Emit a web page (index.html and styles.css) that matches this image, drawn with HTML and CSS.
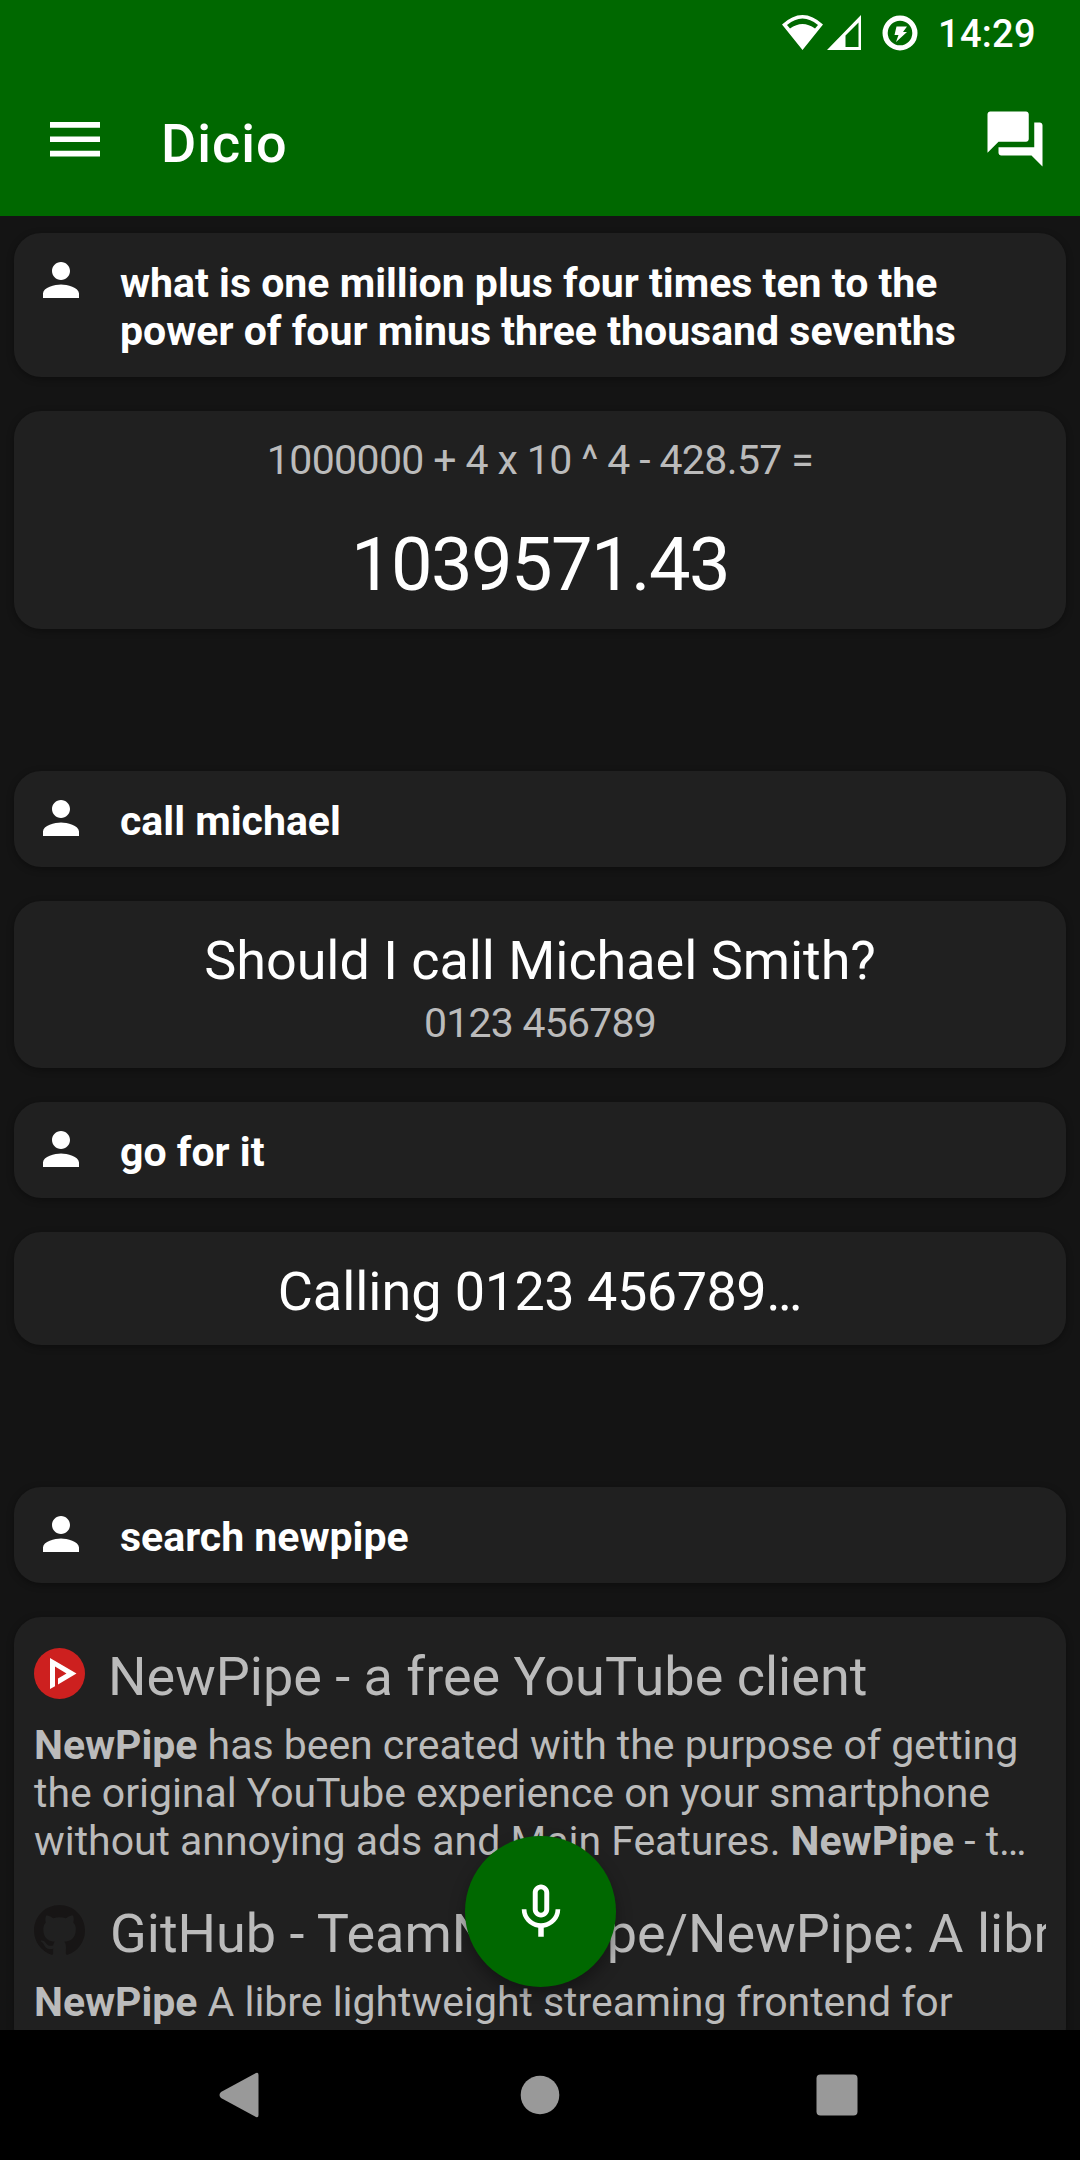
FILE: index.html
```html
<!DOCTYPE html>
<html lang="en">
<head>
<meta charset="utf-8">
<title>Dicio</title>
<link rel="stylesheet" href="styles.css">
</head>
<body>
<svg class="defs" aria-hidden="true">
  <symbol id="person" viewBox="0 0 24 24"><path d="M12 12c2.210 0 4-1.790 4-4s-1.790-4-4-4-4 1.790-4 4 1.790 4 4 4zm0 2c-2.670 0-8 1.340-8 4v2h16v-2c0-2.660-5.330-4-8-4z"/></symbol>
</svg>
<div class="screen">
  <header class="header">
    <div class="status">
      <svg class="wifi" viewBox="0 0 41 35"><path fill-rule="evenodd" d="M0 9.500Q20.500-9.500 41 9.500L20.500 35ZM5 10L8 13.500Q20.500 4.500 33 13.500L36 10Q20.500-3 5 10Z"/></svg>
      <svg class="signal" viewBox="0 0 34 35"><path fill-rule="evenodd" d="M0 35L34 0V35ZM18.500 20.500V32H31.500V7.500Z"/></svg>
      <svg class="saver" viewBox="0 0 36 36"><circle cx="18" cy="18" r="14.900"/><path d="M14.500 11.500H25L21 17H25L14 27L16.500 20H12.500Z"/></svg>
      <span class="clock">14:29</span>
    </div>
    <div class="toolbar">
      <svg class="menu" viewBox="0 0 50 35"><path d="M0 0H50V5.700H0ZM0 14.400H50V20H0ZM0 28.700H50V34.500H0Z"/></svg>
      <h1 class="title">Dicio</h1>
      <svg class="forum" viewBox="0 0 24 24"><path d="M21 6h-2v9H6v2c0 .55.45 1 1 1h11l4 4V7c0-.55-.45-1-1-1zm-4 6V3c0-.55-.45-1-1-1H3c-.55 0-1 .45-1 1v14l4-4h10c.55 0 1-.45 1-1z"/></svg>
    </div>
  </header>
  <main class="conversation">
    <section class="exchange">
      <div class="card query"><svg class="person"><use href="#person"/></svg><p>what is one million plus four times ten to the power of four minus three thousand sevenths</p></div>
      <div class="card answer">
        <p class="sub">1000000 + 4 x 10 ^ 4 - 428.57 =</p>
        <p class="result">1039571.43</p>
      </div>
    </section>
    <section class="exchange">
      <div class="card query"><svg class="person"><use href="#person"/></svg><p>call michael</p></div>
      <div class="card answer">
        <p class="headline">Should I call Michael Smith?</p>
        <p class="sub phone">0123 456789</p>
      </div>
      <div class="card query"><svg class="person"><use href="#person"/></svg><p>go for it</p></div>
      <div class="card answer"><p class="headline">Calling <span class="digits">0123 456789</span>…</p></div>
    </section>
    <section class="exchange">
      <div class="card query"><svg class="person"><use href="#person"/></svg><p>search newpipe</p></div>
      <div class="card results">
        <article class="hit">
          <div class="hit-head">
            <svg class="favicon" viewBox="0 0 51 51"><circle cx="25.500" cy="25.500" r="25.500" fill="#cd201f"/><path fill="#fff" fill-rule="evenodd" d="M16 10L42.500 25.500L24 36.500V30.500L32.500 25.500L21 18.500V38.200L16 41Z"/></svg>
            <h2>NewPipe - a free YouTube client</h2>
          </div>
          <p class="snippet"><b>NewPipe</b> has been created with the purpose of getting<br>the original YouTube experience on your smartphone<br>without annoying ads and Main Features. <b>NewPipe</b> - t…</p>
        </article>
        <article class="hit">
          <div class="hit-head">
            <svg class="favicon" viewBox="0 0 16 16"><path fill="#171515" d="M8 0C3.580 0 0 3.580 0 8c0 3.540 2.290 6.530 5.470 7.590.4.070.55-.17.55-.38 0-.19-.01-.82-.01-1.490-2.010.37-2.530-.49-2.690-.94-.09-.23-.48-.94-.82-1.130-.28-.15-.68-.52-.01-.53.63-.01 1.080.58 1.230.82.72 1.210 1.870.87 2.330.66.07-.52.28-.87.51-1.070-1.780-.2-3.640-.89-3.640-3.950 0-.87.31-1.590.82-2.150-.08-.2-.36-1.020.08-2.120 0 0 .67-.21 2.200.82.64-.18 1.320-.27 2-.27s1.360.09 2 .27c1.530-1.040 2.200-.82 2.200-.82.44 1.100.16 1.920.08 2.120.51.56.82 1.270.82 2.150 0 3.070-1.870 3.750-3.650 3.950.29.25.54.73.54 1.480 0 1.070-.01 1.930-.01 2.200 0 .21.15.46.55.38A8.010 8.010 0 0 0 16 8c0-4.420-3.580-8-8-8z"/></svg>
            <h2 class="indented">GitHub - TeamNewPipe/NewPipe: A libre</h2>
          </div>
          <p class="snippet"><b>NewPipe</b> A libre lightweight streaming frontend for</p>
        </article>
      </div>
    </section>
    <button class="fab" aria-label="Speak"><svg viewBox="0 0 24 24"><path d="M12 14c1.660 0 2.990-1.340 2.990-3L15 5c0-1.660-1.340-3-3-3S9 3.340 9 5v6c0 1.660 1.340 3 3 3zm-1.200-9.100c0-.66.54-1.200 1.200-1.200.66 0 1.200.54 1.200 1.200l-.01 6.200c0 .66-.53 1.200-1.190 1.200-.66 0-1.200-.54-1.200-1.200V4.900zm6.500 6.100c0 3-2.540 5.100-5.300 5.100S6.700 14 6.700 11H5c0 3.410 2.720 6.230 6 6.720V21h2v-3.280c3.280-.48 6-3.300 6-6.720h-1.700z"/></svg></button>
  </main>
  <nav class="navbar">
    <svg viewBox="0 0 44 44"><path d="M39 0Q41.500-1 41.500 2V42Q41.500 45 39 44L4 25Q1 22 4 19Z"/></svg>
    <svg viewBox="0 0 44 44"><circle cx="24" cy="22" r="19.300"/></svg>
    <svg viewBox="0 0 44 44"><rect x="1.500" y="1.500" width="41" height="41" rx="4"/></svg>
  </nav>
</div>
</body>
</html>
```
FILE: styles.css
```css
* { box-sizing: border-box; margin: 0; padding: 0; }
body { background: #141414; color: #fff; font-family: Roboto, sans-serif; }
svg { display: block; flex: none; fill: currentColor; }
.defs { position: absolute; width: 0; height: 0; }
.screen { display: flex; flex-direction: column; width: 1080px; height: 2160px; overflow: hidden; }

.header { height: 216px; flex: none; background: #006800; }
.status { display: flex; justify-content: flex-end; align-items: center; height: 65px; padding-right: 45px; }
.wifi { width: 41px; height: 35px; }
.signal { width: 34px; height: 35px; margin-left: 4px; }
.saver { width: 36px; height: 36px; margin-left: 21px; }
.saver circle { fill: none; stroke: #fff; stroke-width: 5.2; }
.clock { width: 97px; margin: 2px 0 0 20px; font-size: 38px; font-weight: 500; line-height: 46px; letter-spacing: .3px; white-space: nowrap; }
.toolbar { display: flex; align-items: center; height: 148px; padding: 0 32px 0 50px; }
.menu { width: 50px; height: 35px; }
.title { flex: 1; margin: 9px 0 0 61px; font-size: 54px; font-weight: 500; line-height: 64px; letter-spacing: 1px; }
.forum { width: 66px; height: 66px; }

.conversation { position: relative; flex: 1; min-height: 0; overflow: hidden; padding: 17px 14px 0; display: flex; flex-direction: column; gap: 142px; }
.exchange { display: flex; flex-direction: column; gap: 34px; }
.card { border-radius: 27px; background: #202020; box-shadow: 0 2px 7px rgba(0, 0, 0, .35); }
.query { display: flex; gap: 32px; padding: 26px 20px 22px; font-size: 41px; font-weight: 700; line-height: 48px; }
.person { width: 54px; height: 54px; margin: -6px 0; }
.answer { padding: 25px 20px 21px; text-align: center; }
.sub { color: #bbb; font-size: 41px; line-height: 48px; letter-spacing: -.62px; }
.result { margin-top: 37px; font-size: 74px; line-height: 87px; letter-spacing: -1.6px; }
.headline { padding-top: 3px; font-size: 54px; line-height: 64px; letter-spacing: -.05px; }
.digits { letter-spacing: -.5px; }
.phone { margin-top: 6px; letter-spacing: -.8px; }

.results { display: flex; flex-direction: column; gap: 37px; padding: 28px 20px; color: #bbb; }
.hit-head { display: flex; align-items: center; gap: 23px; overflow: hidden; }
.favicon { width: 51px; height: 51px; margin-top: -7px; }
.hit-head h2 { font-size: 54px; font-weight: 400; line-height: 64px; white-space: nowrap; }
.hit-head .indented { padding-left: 2px; }
.snippet { margin-top: 12px; font-size: 41px; line-height: 48px; letter-spacing: -.03px; white-space: nowrap; }

.fab { position: absolute; left: 465px; bottom: 43px; display: grid; place-items: center; width: 151px; height: 151px; border: 0; border-radius: 50%; background: #006800; color: #fff; box-shadow: 0 8px 16px rgba(0, 0, 0, .35); }
.fab svg { width: 66px; height: 66px; }

.navbar { display: flex; justify-content: space-between; align-items: center; flex: none; height: 130px; padding: 0 221px 0 217px; background: #000; color: #999; }
.navbar svg { width: 44px; height: 44px; overflow: visible; }
```
